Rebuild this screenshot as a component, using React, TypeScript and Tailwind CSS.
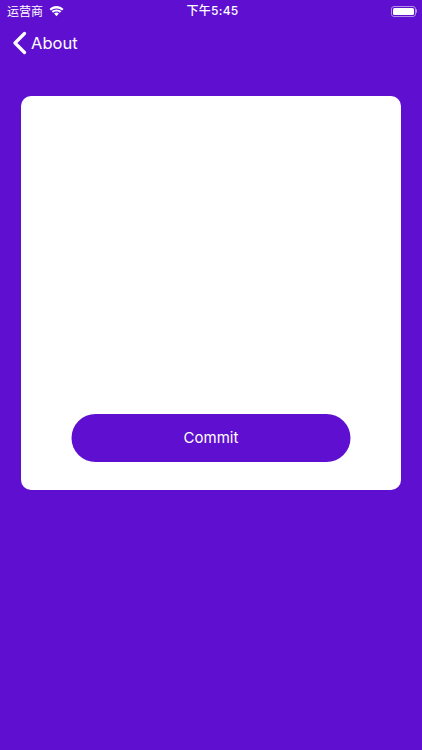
function StatusBar() {
  return (
    <div className="flex h-[22px] items-center justify-between pl-[7px] pr-[5px] text-white">
      <div className="flex w-[150px] items-center gap-[6px]">
        <span className="text-[12px] leading-none font-['Noto_Sans_CJK_SC',sans-serif]">运营商</span>
        <svg width="15" height="11" viewBox="0 0 15 11" fill="white" className="mt-[1px]">
          <path d="M7.5 2.4c2.1 0 4 .8 5.5 2.2l1.5-1.6C12.6 1.1 10.200 0 7.500 0S2.400 1.100.5 3L2 4.600c1.500-1.400 3.400-2.200 5.500-2.200z" />
          <path d="M7.500 5.500c1.300 0 2.500.5 3.400 1.300l1.400-1.500C11 4.100 9.300 3.400 7.500 3.400S4 4.100 2.700 5.300l1.400 1.500c.9-.8 2.100-1.300 3.400-1.300z" />
          <path d="M7.500 6.500c-1 0-1.800.4-2.400 1l2.400 2.800 2.400-2.800c-.6-.6-1.400-1-2.400-1z" />
        </svg>
      </div>
      <span className="ml-[1px] text-[12px] leading-none font-medium tracking-[0.3px] font-['Inter','Noto_Sans_CJK_SC',sans-serif]">下午5:45</span>
      <div className="flex w-[150px] justify-end">
        <div className="flex items-center">
          <div className="h-[11px] w-[25px] rounded-[3px] border border-[#b08fe6] p-[1px]">
            <div className="h-full w-full rounded-[1.5px] bg-white" />
          </div>
          <div className="h-[4px] w-[1px] rounded-r-sm bg-[#b08fe6]" />
        </div>
      </div>
    </div>
  );
}

export default function App() {
  return (
    <div className="flex h-[750px] w-[422px] flex-col bg-[#5f0fd0] font-['Inter',sans-serif]">
      <StatusBar />
      <div className="flex h-[42px] items-center pl-[13px] text-white">
        <svg width="14" height="24" viewBox="0 0 14 24" fill="none" stroke="white" strokeWidth="3.2" strokeLinecap="round" strokeLinejoin="round">
          <path d="M11.500 2.500 2 12l9.500 9.500" />
        </svg>
        <span className="ml-[4px] text-[16.5px] leading-none">About</span>
      </div>
      <div className="mx-[21px] mt-[32px] flex h-[394px] flex-col items-center justify-end rounded-[10px] bg-white pb-[28px]">
        <button className="flex h-[48px] w-[279px] -translate-x-[0.5px] items-center justify-center rounded-full bg-[#5f0fd0] pl-[1px] text-[15px] text-white">
          Commit
        </button>
      </div>
    </div>
  );
}
